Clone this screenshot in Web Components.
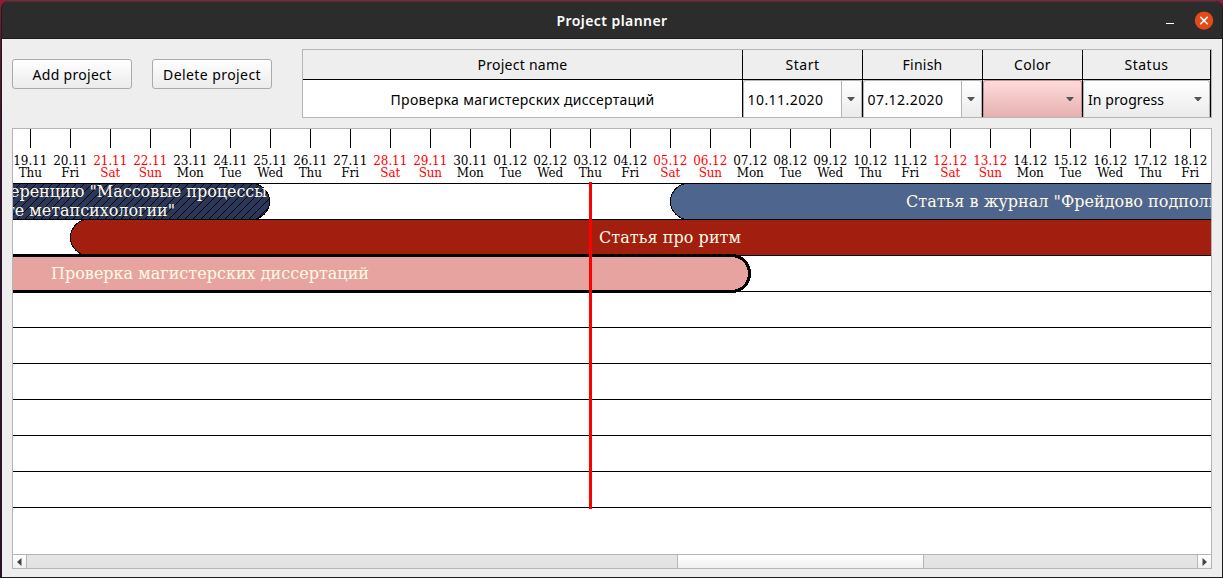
<!DOCTYPE html>
<html lang="en">
<head>
<meta charset="utf-8">
<title>Project planner</title>
<style>
html,body{margin:0;height:100%;overflow:hidden}
body{font-family:"Noto Sans","Open Sans",sans-serif;font-size:14px;color:#000}
</style>
</head>
<body>
<planner-window></planner-window>
<script>
const define=(name,html,setup)=>customElements.define(name,class extends HTMLElement{
  connectedCallback(){
    if(this.shadowRoot)return;
    const t=document.createElement('template');
    t.innerHTML=typeof html==='function'?html(this):html;
    this.attachShadow({mode:'open'}).append(t.content.cloneNode(true));
    if(setup)setup(this);
  }
});

// Text spaced so that its line takes a given width in pixels.
define('fit-text','<style>:host{display:inline-block;white-space:nowrap;line-height:inherit}span{display:inline-block}</style><span><slot></slot></span>',el=>{
  const s=el.shadowRoot.querySelector('span'),n=[...el.textContent].length,w=+el.getAttribute('w');
  const d=(w-s.getBoundingClientRect().width)/n;
  s.style.letterSpacing=d.toFixed(3)+'px';
});

define('title-bar',`<style>
:host{display:grid;grid-template-columns:1fr auto 1fr;align-items:center;height:38px;box-sizing:border-box;background:#2c2c2c;border-top:1px solid #3c3c3c;border-bottom:1px solid #1c1c1c;border-radius:7px 7px 0 0;color:#fff;font-weight:600}
b{grid-column:2;line-height:36px;padding-top:1px;font-weight:600}
div{display:flex;justify-content:flex-end;align-items:center;padding-right:8px;gap:20px}
svg{display:block}
</style><b><slot></slot></b><div>
<svg width="9" height="18"><path d="M1 11.5h8" stroke="#fff" stroke-width="1"/></svg>
<svg width="20" height="20"><circle cx="10" cy="9.6" r="9.2" fill="#e24a19"/><path d="M6.3 5.9l7.4 7.4M13.7 5.9l-7.4 7.4" stroke="#fff" stroke-width="1.5"/></svg></div>`);

define('push-button',`<style>
:host{display:block;width:118px;height:28px;border:1px solid #aaa;border-radius:3px;background:linear-gradient(#fff,#ebebeb);text-align:center;line-height:29px}
</style><slot></slot>`);

define('drop-arrow','<style>:host{display:block}svg{display:block}</style><svg width="8" height="4"><path d="M0 0h8L4.6 4H3.4z" fill="#555"/></svg>');

define('date-field',`<style>
:host{display:flex;height:37px;box-sizing:border-box;border:1px solid #b4b4b4;border-bottom:0;border-radius:3px 3px 0 0;background:#fff}
span{flex:1;padding-left:3.5px;line-height:37px;white-space:nowrap}
div{width:20px;border-left:1px solid #b4b4b4;background:linear-gradient(#fff,#ebebeb);display:flex;align-items:center;box-sizing:border-box;padding-left:5px;border-radius:0 3px 0 0}
</style><span><slot></slot></span><div><drop-arrow></drop-arrow></div>`);

define('combo-field',`<style>
:host{display:flex;align-items:center;height:37px;box-sizing:border-box;border:1px solid var(--edge,#b4b4b4);border-bottom:0;border-radius:3px 3px 0 0;background:linear-gradient(var(--top,#fff),var(--bottom,#ebebeb));padding:0 7px 0 4px}
span{flex:1;line-height:39px;white-space:nowrap}
</style><span><slot></slot></span><drop-arrow></drop-arrow>`);

define('project-table',`<style>
:host{display:grid;grid-template-columns:439px 119px 119px 99px 127px;grid-template-rows:29px 37px;gap:1px;width:908px;height:67px;border:1px solid #b5b5b5;box-sizing:content-box;background:#000;text-align:center}
.h{background:#eee;line-height:30px}
.n{background:#fff;line-height:39px}
combo-field,date-field{text-align:left}
.c{background:#eee}
</style>
<div class="h"><fit-text w="90">Project name</fit-text></div><div class="h"><fit-text w="34">Start</fit-text></div><div class="h"><fit-text w="40">Finish</fit-text></div><div class="h"><fit-text w="37">Color</fit-text></div><div class="h"><fit-text w="44">Status</fit-text></div>
<div class="n"><fit-text w="264">Проверка магистерских диссертаций</fit-text></div>
<div class="c"><date-field><fit-text w="76">10.11.2020</fit-text></date-field></div>
<div class="c"><date-field><fit-text w="76">07.12.2020</fit-text></date-field></div>
<div class="c"><combo-field style="--edge:#c29090;--top:#ffdada;--bottom:#e6b0b0"></combo-field></div>
<div class="c"><combo-field><fit-text w="76">In progress</fit-text></combo-field></div>`);

define('day-mark',`<style>
:host{display:flex;flex-direction:column;align-items:center;width:40px;height:54px;flex:none;font-size:12px;line-height:12px;color:#000}
:host([off]){color:#f00}
i{display:block;width:1px;height:19px;background:#000;margin:0 1px 7px 0}
::slotted(*){margin-right:1.5px}
</style><i></i><slot></slot>`);

define('date-scale',()=>{
  const names=['Thu','Fri','Sat','Sun','Mon','Tue','Wed'],w=[23,18,20,23,27,22,26];
  let out='';
  for(let k=0;k<30;k++){
    const d=19+k,day=k<12?d+'.11':String(k-11).padStart(2,'0')+'.12',j=k%7;
    out+=`<day-mark${j==2||j==3?' off':''}><fit-text w="34">${day}</fit-text><fit-text w="${w[j]}">${names[j]}</fit-text></day-mark>`;
  }
  return '<style>:host{display:flex;height:54px;margin-left:-2px;width:1200px}</style>'+out;
});

define('gantt-bar',el=>{
  const g=n=>+el.getAttribute(n),x=g('x'),w=g('w'),s=g('stroke')||1;
  let dots='';
  for(let i=0;i<8;i++)dots+=`M${i} ${7-i}h1v1h-1z`;
  return `<style>:host{display:block;width:1198px;height:36px}svg{display:block;overflow:visible}</style>
<svg width="1198" height="36" shape-rendering="crispEdges">
<defs><pattern id="h" width="8" height="8" patternUnits="userSpaceOnUse"><path d="${dots}" fill="#000"/></pattern></defs>
<rect x="${x+.5}" y=".5" width="${w}" height="36" rx="18" fill="${el.getAttribute('fill')}"/>
<rect x="${x+.5}" y=".5" width="${w}" height="36" rx="18" fill="${el.hasAttribute('hatched')?'url(#h)':'none'}" stroke="#000" stroke-width="${s}"/></svg>`;
});

define('gantt-lane',`<style>
:host{display:grid;height:36px;color:#fffbe8;font-size:16px}
::slotted(*){grid-area:1/1}
:host::before{content:"";grid-area:1/1;height:1px;background:#000}
</style><slot></slot>`);

define('h-scroll',`<style>
:host{display:flex;height:13px;border-top:1px solid #b5b5b5;background:linear-gradient(#e6e6e6,#e2e2e2)}
.b{width:13px;background:linear-gradient(#fff,#f0f0f0);display:flex;align-items:center;justify-content:center}
.l{border-right:1px solid #b5b5b5}.r{border-left:1px solid #b5b5b5}
.t{margin-left:650px;width:245px;border:solid #b5b5b5;border-width:0 1px;background:linear-gradient(#fff,#f0f0f0);margin-right:auto}
svg{display:block}
</style><div class="b l"><svg width="5" height="8"><path d="M4.5 0v8L0 4z" fill="#444"/></svg></div><div class="t"></div><div class="b r"><svg width="5" height="8"><path d="M.5 0v8L5 4z" fill="#444"/></svg></div>`);

define('gantt-chart',`<style>
:host{display:flex;flex-direction:column;width:1198px;height:439px;border:1px solid #b5b5b5;background:#fff;overflow:hidden;font-family:"DejaVu Serif",serif}
.lanes{position:relative;flex:1}
.today{position:absolute;left:576px;top:-1px;width:3px;height:327px;background:#f00}
p{margin:0;z-index:1;line-height:37px;white-space:nowrap}
p.two{line-height:19px;margin-top:-1px;text-align:left}
.two fit-text{display:block}
date-scale{overflow:hidden}
</style>
<date-scale></date-scale>
<div class="lanes">
<gantt-lane><gantt-bar x="-60" w="316" fill="#2a3759" hatched></gantt-bar><gantt-bar x="657" w="700" fill="#4e658d"></gantt-bar>
<p class="two"><fit-text w="257" style="margin-left:-3px">еренцию "Массовые процессы</fit-text><fit-text w="169" style="margin-left:-7px">те метапсихологии"</fit-text></p><p style="margin-left:893px"><fit-text w="321">Статья в журнал "Фрейдово подполье</fit-text></p></gantt-lane>
<gantt-lane><gantt-bar x="57" w="1300" fill="#a21e0e"></gantt-bar><p style="margin-left:586px"><fit-text w="142">Статья про ритм</fit-text></p></gantt-lane>
<gantt-lane><gantt-bar x="-60" w="796" fill="#e7a39f" stroke="3"></gantt-bar><p style="margin-left:38px"><fit-text w="318">Проверка магистерских диссертаций</fit-text></p></gantt-lane>
<gantt-lane></gantt-lane><gantt-lane></gantt-lane><gantt-lane></gantt-lane><gantt-lane></gantt-lane><gantt-lane></gantt-lane><gantt-lane></gantt-lane><gantt-lane></gantt-lane>
<div class="today"></div></div>
<h-scroll></h-scroll>`);

define('planner-window',`<style>
:host{display:block;box-sizing:border-box;width:1223px;height:578px;padding:1px 0 0 1px;background:linear-gradient(#8c1f36,#65162f 40px,#3d0b38 180px,#3a0838)}
.w{height:577px;box-sizing:border-box;border:1px solid #1c1c1c;border-top:0;border-radius:8px 8px 0 0;background:linear-gradient(#1c1c1c 30px,#eee 30px);overflow:hidden}
.top{display:flex;padding:10px 0 10px 10px;height:69px}
.top push-button{margin:10px 20px 0 0}
project-table{margin-left:10px}
gantt-chart{margin-left:10px}
</style><div class="w"><title-bar><fit-text w="111">Project planner</fit-text></title-bar>
<div class="top"><push-button><fit-text w="79">Add project</fit-text></push-button><push-button><fit-text w="98">Delete project</fit-text></push-button><project-table></project-table></div>
<gantt-chart></gantt-chart></div>`);
</script>
</body>
</html>
